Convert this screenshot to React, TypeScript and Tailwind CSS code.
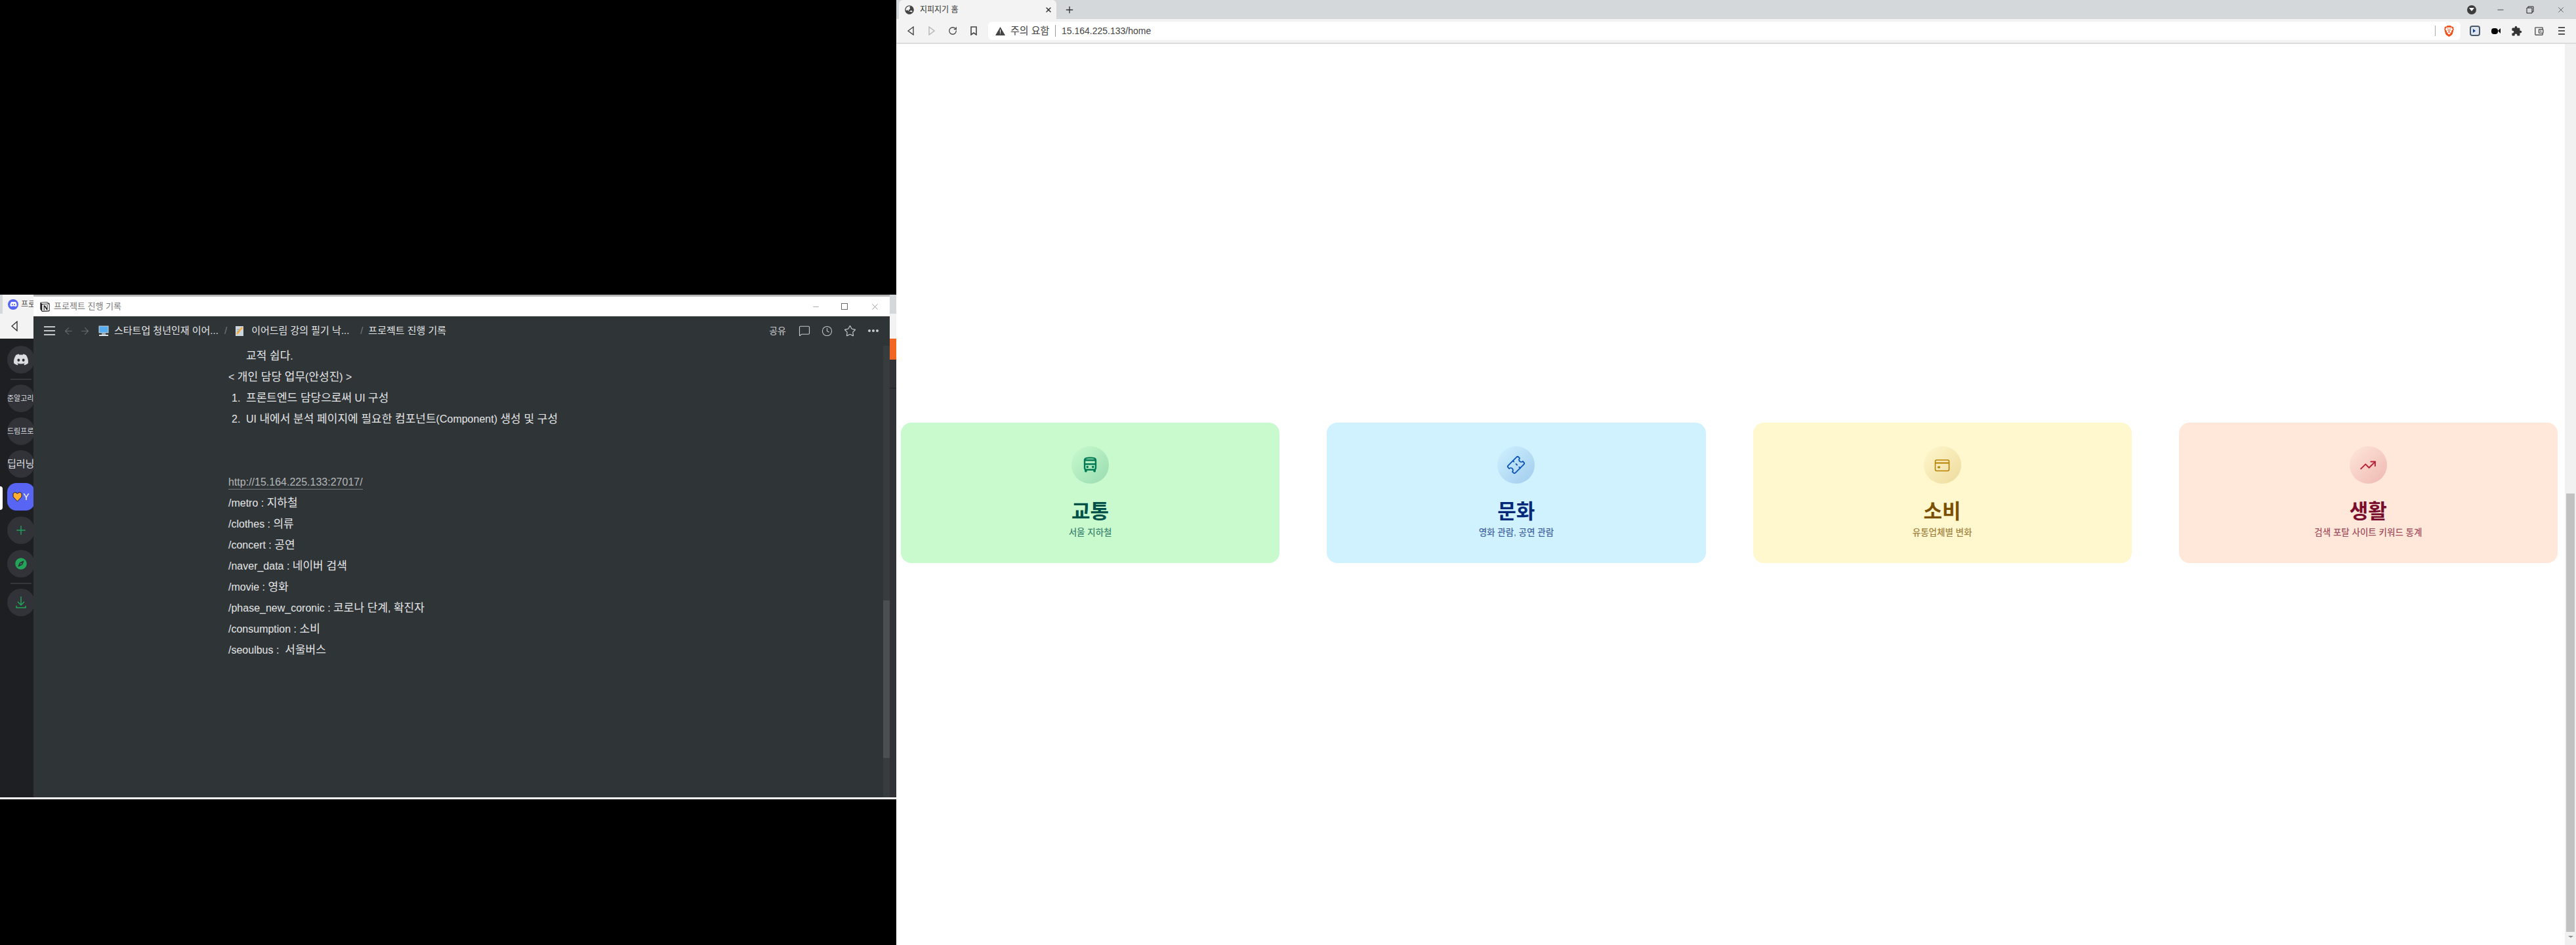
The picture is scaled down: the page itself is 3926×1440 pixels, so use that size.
import { ArrowLeft, ArrowRight, Clock, Minus, MessageSquare, Plus, RotateCw, Star, Ticket, TrendingUp, X } from "lucide-react";
import { MdOutlineDirectionsBus, MdExtension, MdOutlineAccountBalanceWallet } from "react-icons/md";
import { FaDiscord, FaGlobeAsia, FaCompass } from "react-icons/fa";
import { SiBrave, SiNotion } from "react-icons/si";

const ROUTES = [
  "/metro : 지하철",
  "/clothes : 의류",
  "/concert : 공연",
  "/naver_data : 네이버 검색",
  "/movie : 영화",
  "/phase_new_coronic : 코로나 단계, 확진자",
  "/consumption : 소비",
  "/seoulbus :  서울버스",
];

function CardIcon() {
  return (
    <svg width="24" height="24" viewBox="0 0 24 24" fill="none" stroke="currentColor" strokeWidth="1.6">
      <rect x="1.5" y="4" width="21" height="16.5" rx="2" />
      <path d="M1.5 8.5h21" strokeWidth="2" />
      <rect x="5" y="13.5" width="4" height="3" rx="1" fill="currentColor" stroke="none" />
    </svg>
  );
}

const CARDS = [
  { title: "교통", sub: "서울 지하철", bg: "bg-[#c8facd]", text: "text-[#005249]", icon: "text-[#007b55]", disc: "bg-[linear-gradient(135deg,rgba(0,123,85,0)_0%,rgba(0,123,85,0.24)_100%)]", glyph: <MdOutlineDirectionsBus size={29} /> },
  { title: "문화", sub: "영화 관람, 공연 관람", bg: "bg-[#d0f2ff]", text: "text-[#04297a]", icon: "text-[#0c53b7]", disc: "bg-[linear-gradient(135deg,rgba(12,83,183,0)_0%,rgba(12,83,183,0.24)_100%)]", glyph: <Ticket size={27} strokeWidth={1.6} className="-rotate-45" /> },
  { title: "소비", sub: "유통업체별 변화", bg: "bg-[#fff7cd]", text: "text-[#7a4f01]", icon: "text-[#b78103]", disc: "bg-[linear-gradient(135deg,rgba(183,129,3,0)_0%,rgba(183,129,3,0.24)_100%)]", glyph: <CardIcon /> },
  { title: "생활", sub: "검색 포탈 사이트 키워드 통계", bg: "bg-[#ffe7d9]", text: "text-[#7a0c2e]", icon: "text-[#b72136]", disc: "bg-[linear-gradient(135deg,rgba(183,33,54,0)_0%,rgba(183,33,54,0.24)_100%)]", glyph: <TrendingUp size={26} strokeWidth={1.8} /> },
];

// hangul runs are set a bit larger than the latin ones, as in the notion page
function Mixed({ text }: { text: string }) {
  const parts = text.split(/([가-힣]+(?: [가-힣]+)*)/);
  return (
    <span>
      {parts.map((p, i) => (i % 2 ? <span key={i} className="text-[17px]">{p}</span> : p))}
    </span>
  );
}

function Pc() {
  return (
    <svg width="16" height="17" viewBox="0 0 16 17">
      <rect x="1" y="1" width="14" height="10" fill="#55acee" stroke="#ccd6dd" />
      <rect x="5" y="11" width="6" height="3" fill="#99aab5" />
      <rect x="1" y="14" width="14" height="2" fill="#e1e8ed" />
    </svg>
  );
}

function Memo() {
  return (
    <svg width="14" height="17" viewBox="0 0 14 17">
      <rect x="1" y="1" width="12" height="15" fill="#ccd6dd" />
      <path d="M3 13 11 3" stroke="#ffac33" strokeWidth="2.5" />
      <path d="M3 6h4M3 9h3" stroke="#8899a6" />
    </svg>
  );
}

function DiscordWindow() {
  const Server = ({ children, className = "" }: { children: React.ReactNode; className?: string }) => (
    <div className={`w-[42px] h-[42px] rounded-full bg-[#313338] flex items-center justify-center overflow-hidden whitespace-nowrap shrink-0 ${className}`}>
      {children}
    </div>
  );
  return (
    <div className="absolute left-0 top-[449px] w-[1366px] h-[769px] flex flex-col bg-[#313338] border-b-[3px] border-white">
      <div className="h-[29px] flex bg-[#d5d8db] shrink-0">
        <div className="ml-1 w-[120px] bg-[#f3f3f3] flex items-center pl-2 gap-1 text-[12px] text-[#444]">
          <span className="w-4 h-4 rounded-full bg-[#5865f2] flex items-center justify-center text-white">
            <FaDiscord size={11} />
          </span>
          프로
        </div>
      </div>
      <div className="h-[38px] bg-[#f3f3f3] shrink-0 flex items-center pl-[17px]">
        <svg width="10" height="16" viewBox="0 0 10 16" fill="none" stroke="#333" strokeWidth="1.4"><path d="M9 1 1 8l8 7z" /></svg>
      </div>
      <div className="flex-1 flex min-h-0">
        <div className="w-[64px] bg-[#1e1f22] flex flex-col items-start pl-[11px] pt-[11px] shrink-0 relative">
          <Server className="text-[#dbdee1]"><FaDiscord size={24} /></Server>
          <div className="w-8 h-[2px] bg-[#35363c] ml-[5px] mt-[8px] mb-[7px]" />
          <Server className="text-[11px] justify-start text-[#dbdee1]">준알고리</Server>
          <Server className="mt-2 text-[11px] justify-start text-[#dbdee1]">드림프로</Server>
          <Server className="mt-2 text-[15px] justify-start text-[#dbdee1]">딥러닝</Server>
          <div className="absolute left-0 top-[225px] w-1 h-9 rounded-r bg-white" />
          <div className="mt-2 w-[42px] h-[42px] rounded-[14px] bg-[#5865f2] flex items-center justify-center gap-px text-[14px] text-white shrink-0">
            <svg width="15" height="16" viewBox="0 0 15 16"><path d="M1 3 4 1l3.500 2L11 1l3 2v5l-6.500 7L1 8z" fill="#ffac33" stroke="#222" /></svg>
            Y
          </div>
          <Server className="mt-[9px] text-[#23a559]"><Plus size={22} strokeWidth={1.5} /></Server>
          <Server className="mt-[9px] text-[#23a559]"><FaCompass size={18} /></Server>
          <div className="w-8 h-[2px] bg-[#35363c] ml-[5px] mt-[8px] mb-[7px]" />
          <Server className="text-[#23a559]">
            <svg width="16" height="20" viewBox="0 0 16 20" fill="none" stroke="currentColor" strokeWidth="1.5"><path d="M8 1v13M3 9l5 5 5-5M1 15v3h14v-3" /></svg>
          </Server>
        </div>
        <div className="flex-1 flex flex-col">
          <div className="h-8 bg-[#f26522]" />
          <div className="h-[44px] border-b border-[#232428]" />
        </div>
      </div>
    </div>
  );
}

function NotionWindow() {
  return (
    <div className="absolute left-[51px] top-[449px] w-[1305px] h-[766px] flex flex-col border-t-[3px] border-[#b5b5b5] bg-[#2f3437] text-[#e4e5e6]">
      <div className="h-[30px] bg-white flex items-center shrink-0 text-[#777]">
        <SiNotion size={15} className="ml-[10px] text-[#222]" />
        <span className="ml-[6px] text-[13px]">프로젝트 진행 기록</span>
        <div className="ml-auto flex items-center text-[#666]">
          <Minus size={13} strokeWidth={1} className="mr-[32px]" />
          <div className="w-[10px] h-[10px] border border-[#666] mr-[34px]" />
          <X size={15} strokeWidth={1} className="mr-[15px]" />
        </div>
      </div>
      <div className="h-[45px] flex items-center shrink-0 text-[15px] pb-[1px] whitespace-nowrap">
        <div className="ml-[16px] w-[17px] flex flex-col gap-[4px]">
          <span className="h-[2px] bg-[#c5c6c7]" />
          <span className="h-[2px] bg-[#c5c6c7]" />
          <span className="h-[2px] bg-[#c5c6c7]" />
        </div>
        <ArrowLeft size={17} strokeWidth={1.5} className="ml-[12px] text-[#676b6e]" />
        <ArrowRight size={17} strokeWidth={1.5} className="ml-[8px] text-[#676b6e]" />
        <span className="ml-[12px]"><Pc /></span>
        <span className="ml-[8px] w-[158px]">스타트업 청년인재 이어...</span>
        <span className="ml-[10px] text-[#777b7e]">/</span>
        <span className="ml-[12px]"><Memo /></span>
        <span className="ml-[11px] w-[146px]">이어드림 강의 필기 낙...</span>
        <span className="ml-[20px] text-[#777b7e]">/</span>
        <span className="ml-[8px]">프로젝트 진행 기록</span>
        <div className="ml-auto flex items-center text-[#c8c9ca]">
          <span className="text-[14px] mr-[19px]">공유</span>
          <MessageSquare size={18} strokeWidth={1.5} className="mr-[17px]" />
          <Clock size={17} strokeWidth={1.5} className="mr-[17px]" />
          <Star size={19} strokeWidth={1.5} className="mr-[18px]" />
          <div className="flex gap-[2px] mr-[17px]">
            <span className="w-[4px] h-[4px] rounded-full bg-[#c8c9ca]" />
            <span className="w-[4px] h-[4px] rounded-full bg-[#c8c9ca]" />
            <span className="w-[4px] h-[4px] rounded-full bg-[#c8c9ca]" />
          </div>
        </div>
      </div>
      <div className="flex-1 flex min-h-0">
        <div className="flex-1 pl-[297px] text-[16px] [&>div]:h-8 [&>div]:flex [&>div]:items-center [&>div]:whitespace-pre">
          <div className="pl-[27px]"><Mixed text="교적 쉽다." /></div>
          <div><Mixed text="< 개인 담당 업무(안성진) >" /></div>
          <div className="pl-[5px]"><span className="w-[22px]">1.</span><Mixed text="프론트엔드 담당으로써 UI 구성" /></div>
          <div className="pl-[5px]"><span className="w-[22px]">2.</span><Mixed text="UI 내에서 분석 페이지에 필요한 컴포넌트(Component) 생성 및 구성" /></div>
          <div />
          <div />
          <div><span className="text-[#b4b6b7] border-b border-[#777b7e] leading-[21px]">http://15.164.225.133:27017/</span></div>
          {ROUTES.map((r) => (
            <div key={r}><Mixed text={r} /></div>
          ))}
        </div>
        <div className="w-[10px] bg-[#373c3f] pt-[388px] shrink-0">
          <div className="h-[240px] bg-[#4a4f52]" />
        </div>
      </div>
    </div>
  );
}

function Browser() {
  return (
    <div className="flex-1 flex flex-col bg-white">
      <div className="h-[29px] bg-[#d5d8db] flex items-center shrink-0 pl-1 text-[#333]">
        <div className="w-[240px] h-full bg-[#f3f3f3] rounded-t-md flex items-center pl-[9px] text-[12px]">
          <FaGlobeAsia size={14} className="text-[#444]" />
          <span className="ml-[9px]">지피지기 홈</span>
          <X size={12} strokeWidth={3} className="ml-auto mr-[6px]" />
        </div>
        <Plus size={16} strokeWidth={2} className="ml-[12px]" />
        <div className="ml-auto flex items-center">
          <span className="w-[14px] h-[14px] rounded-full bg-[#3c3c3c] flex items-center justify-center mr-[30px]">
            <span className="border-x-[4px] border-t-[5px] border-x-transparent border-t-white" />
          </span>
          <Minus size={14} strokeWidth={1.5} className="mr-[32px]" />
          <svg width="12" height="12" viewBox="0 0 12 12" fill="none" stroke="#222" className="mr-[34px]"><path d="M3 3V1h8v8H9M1 3h8v8H1z" /></svg>
          <X size={14} strokeWidth={1.2} className="mr-[16px]" />
        </div>
      </div>
      <div className="h-[38px] bg-[#f3f3f3] border-b-2 border-[#dcdcdc] flex items-center shrink-0 text-[#444]">
        <svg width="10" height="14" viewBox="0 0 10 14" fill="none" stroke="#444" strokeWidth="1.4" className="ml-[17px]"><path d="M9 1 1 7l8 6z" /></svg>
        <svg width="10" height="14" viewBox="0 0 10 14" fill="none" stroke="#b5b5b5" strokeWidth="1.4" className="ml-[22px]"><path d="m1 1 8 6-8 6z" /></svg>
        <RotateCw size={14} strokeWidth={2.2} className="ml-[20px]" />
        <svg width="10" height="14" viewBox="0 0 10 14" fill="none" stroke="#444" strokeWidth="1.6" className="ml-[20px]"><path d="M1 1h8v12L5 10l-4 3z" /></svg>
        <div className="ml-[17px] w-[2244px] h-[28px] bg-white rounded-md flex items-center text-[#444] text-[14px]">
          <svg width="15" height="13" viewBox="0 0 15 13" className="ml-[11px]"><path d="M7.500 0 15 13H0z" fill="#444" /><path d="M7 4h1v5H7zM7 10h1v1H7z" fill="#fff" /></svg>
          <span className="ml-[8px] w-[60px] text-[15px] whitespace-nowrap">주의 요함</span>
          <span className="ml-[8px] w-px h-[18px] bg-[#9a9a9a]" />
          <span className="ml-[9px]">15.164.225.133/home</span>
          <span className="ml-auto w-px h-[16px] bg-[#aaa]" />
          <SiBrave size={17} className="ml-[12px] mr-[9px] text-[#f1501b]" />
        </div>
        <div className="w-[16px] h-[16px] ml-[14px] bg-[#dfe6ee] border-2 border-[#4a5a6a] rounded-sm flex items-center pl-[3px]">
          <span className="border-y-[3px] border-l-[4px] border-y-transparent border-l-[#0c3f9c]" />
        </div>
        <div className="ml-[17px] w-[10px] h-[9px] bg-black rounded-sm" />
        <div className="w-0 h-0 border-y-[4px] border-r-[4px] border-y-transparent border-r-black" />
        <MdExtension size={17} className="ml-[16px] text-[#333]" />
        <MdOutlineAccountBalanceWallet size={17} className="ml-[17px] text-[#555]" />
        <div className="ml-[21px] w-[10px] flex flex-col gap-[3px]">
          <span className="h-[2px] bg-[#555]" />
          <span className="h-[2px] bg-[#555]" />
          <span className="h-[2px] bg-[#555]" />
        </div>
      </div>
      <div className="flex-1 flex min-h-0">
        <main className="flex-1 pl-[7px] pr-[11px] pt-[577px]">
          <div className="grid grid-cols-4 gap-[72px]">
            {CARDS.map((c) => (
              <div key={c.title} className={`h-[214px] rounded-2xl flex flex-col items-center pt-9 ${c.bg} ${c.text}`}>
                <div className={`w-[57px] h-[57px] rounded-full flex items-center justify-center ${c.disc} ${c.icon}`}>
                  {c.glyph}
                </div>
                <h3 className="mt-[22px] text-[31px] leading-[42px] font-bold">{c.title}</h3>
                <p className="mt-[1px] text-[13.5px] leading-[20px] font-medium opacity-70">{c.sub}</p>
              </div>
            ))}
          </div>
        </main>
        <div className="w-[17px] bg-[#f1f1f1] flex flex-col items-center pt-[685px] shrink-0">
          <div className="w-[13px] h-[668px] bg-[#c1c1c1]" />
          <div className="mt-[6px] w-0 h-0 border-x-[4px] border-t-[3px] border-x-transparent border-t-[#8a8a8a]" />
        </div>
      </div>
    </div>
  );
}

export default function App() {
  return (
    <div className="w-[3926px] h-[1440px] bg-black flex overflow-hidden font-['Liberation_Sans','Noto_Sans_CJK_KR',sans-serif]">
      <div className="relative w-[1366px] shrink-0">
        <DiscordWindow />
        <NotionWindow />
      </div>
      <Browser />
    </div>
  );
}
